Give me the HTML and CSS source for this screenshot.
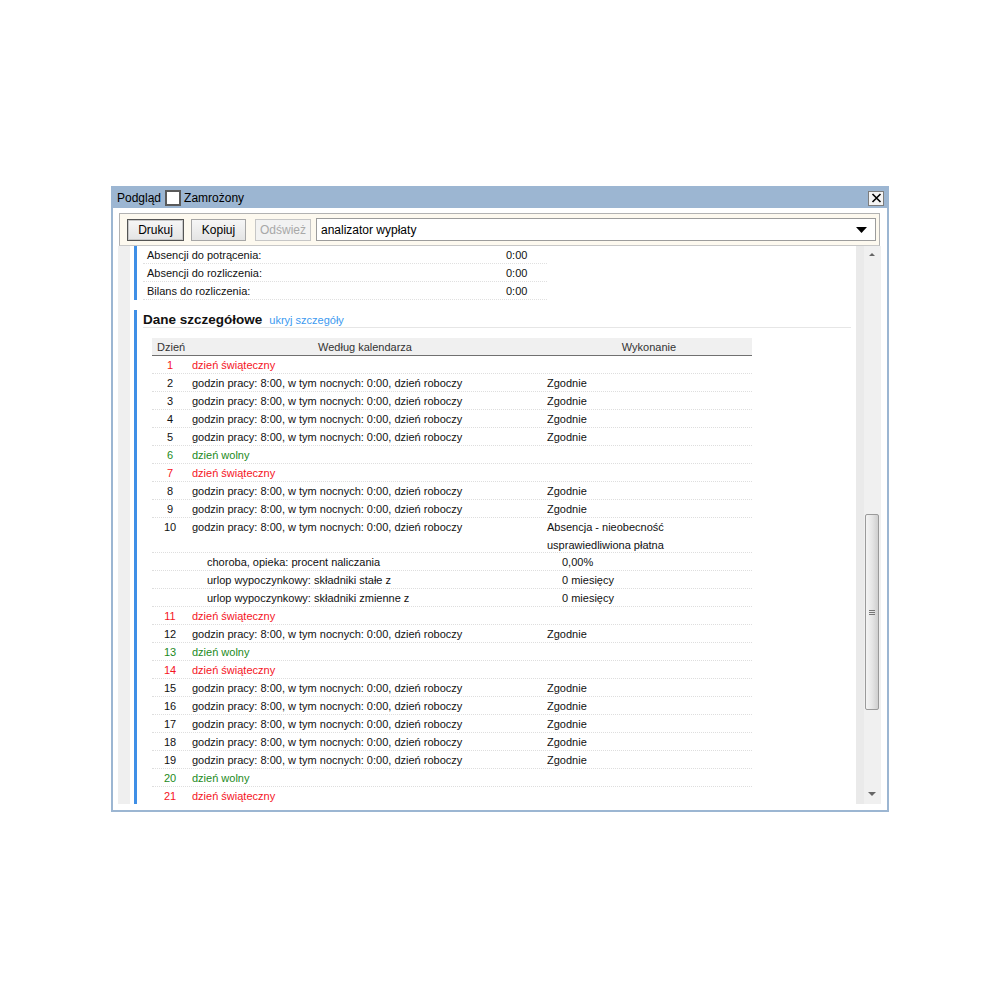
FILE: index.html
```html
<!DOCTYPE html>
<html lang="pl">
<head>
    <meta charset="UTF-8">
    <title>Podgląd - analizator wypłaty</title>
    <link rel="stylesheet" href="styles.css">
</head>
<body>
    <div class="page">
        <div class="window">
            <div class="titlebar">
                <span class="title">Podgląd</span>
                <span class="checkbox"></span>
                <span class="title">Zamrożony</span>
                <span class="close">
                    <svg width="11" height="10" viewBox="0 0 11 10"><path d="M1.5 1 L9.5 9 M9.5 1 L1.5 9" stroke="#000" stroke-width="1.6"/></svg>
                </span>
            </div>

            <div class="toolbar-wrap">
                <div class="toolbar">
                    <button class="btn btn-default">Drukuj</button>
                    <button class="btn">Kopiuj</button>
                    <button class="btn btn-disabled">Odśwież</button>
                    <div class="select">
                        <span>analizator wypłaty</span>
                        <svg width="11" height="6" viewBox="0 0 11 6"><path d="M0 0 H11 L5.5 6 Z" fill="#000"/></svg>
                    </div>
                </div>
            </div>

            <div class="viewer">
                <div class="content">
                    <div class="doc">
                        <!-- podsumowanie (przewinięte) -->
                        <div class="section summary">
                            <div class="sum-row"><span>Absencji do potrącenia:</span><span>0:00</span></div>
                            <div class="sum-row"><span>Absencji do rozliczenia:</span><span>0:00</span></div>
                            <div class="sum-row"><span>Bilans do rozliczenia:</span><span>0:00</span></div>
                        </div>

                        <div class="section details">
                            <div class="heading">
                                <span class="heading-title">Dane szczegółowe</span>
                                <a class="link">ukryj szczegóły</a>
                            </div>

                            <div class="table">
                                <div class="row head">
                                    <div class="c-day">Dzień</div>
                                    <div class="c-cal">Według kalendarza</div>
                                    <div class="c-exe">Wykonanie</div>
                                </div>
                                <div id="rows"></div>
                            </div>
                        </div>
                    </div>
                </div>

                <div class="scroll">
                    <div class="scroll-strip"></div>
                    <div class="track">
                        <div class="arrow-up"></div>
                        <div class="thumb"><span class="grip"></span></div>
                        <div class="arrow-down"></div>
                    </div>
                </div>
            </div>
        </div>
    </div>

    <script>
        // dni miesiąca: h = święto, f = wolny, w = roboczy
        const WORK = 'godzin pracy: 8:00, w tym nocnych: 0:00, dzień roboczy';
        const days = [
            { d: 1, t: 'h' }, { d: 2, t: 'w' }, { d: 3, t: 'w' }, { d: 4, t: 'w' },
            { d: 5, t: 'w' }, { d: 6, t: 'f' }, { d: 7, t: 'h' }, { d: 8, t: 'w' },
            { d: 9, t: 'w' },
            { d: 10, t: 'w', exe: 'Absencja - nieobecność<br>usprawiedliwiona płatna', subs: [
                ['choroba, opieka: procent naliczania', '0,00%'],
                ['urlop wypoczynkowy: składniki stałe z', '0 miesięcy'],
                ['urlop wypoczynkowy: składniki zmienne z', '0 miesięcy']
            ] },
            { d: 11, t: 'h' }, { d: 12, t: 'w' }, { d: 13, t: 'f' }, { d: 14, t: 'h' },
            { d: 15, t: 'w' }, { d: 16, t: 'w' }, { d: 17, t: 'w' }, { d: 18, t: 'w' },
            { d: 19, t: 'w' }, { d: 20, t: 'f' }, { d: 21, t: 'h' }
        ];

        const rows = document.getElementById('rows');
        let html = '';
        days.forEach(day => {
            let cls = 'row', cal = WORK, exe = day.exe || 'Zgodnie';
            if (day.t === 'h') { cls += ' holiday'; cal = 'dzień świąteczny'; exe = ''; }
            if (day.t === 'f') { cls += ' free'; cal = 'dzień wolny'; exe = ''; }
            if (day.exe) cls += ' tall';
            html += `<div class="${cls}"><div class="c-day">${day.d}</div><div class="c-cal">${cal}</div><div class="c-exe">${exe}</div></div>`;
            (day.subs || []).forEach(s => {
                html += `<div class="row sub"><div class="c-day"></div><div class="c-cal">${s[0]}</div><div class="c-exe">${s[1]}</div></div>`;
            });
        });
        rows.innerHTML = html;
    </script>
</body>
</html>
```

FILE: styles.css
```css
body {
    margin: 0;
    padding: 0;
    background: #fff;
    font-family: "Liberation Sans", Arial, sans-serif;
    color: #111;
}

.page {
    padding: 186px 0 0 111px;
}

.window {
    width: 774px;
    border: 2px solid #9cb6d2;
    background: #fff;
    padding-bottom: 6px;
}

/* pasek tytułu */
.titlebar {
    height: 20px;
    background: #9cb6d2;
    display: flex;
    align-items: center;
    padding-left: 4px;
}

.title {
    font-size: 12px;
    color: #000;
}

.checkbox {
    width: 12px;
    height: 12px;
    border: 2px solid #5a5a5a;
    background: #fff;
    margin: 0 3px 0 4px;
}

.close {
    margin-left: auto;
    margin-right: 3px;
    width: 14px;
    height: 13px;
    border: 1px solid #7d7d7d;
    background: #f4f4f4;
    display: flex;
    align-items: center;
    justify-content: center;
}

/* przyciski */
.toolbar-wrap {
    padding: 5px 7px 0 6px;
}

.toolbar {
    height: 31px;
    border: 1px solid #b2b2b2;
    border-bottom-color: #c8c8c8;
    background: #fdf9ef;
    display: flex;
    align-items: center;
    padding: 0 3px 0 7px;
}

.btn {
    height: 22px;
    padding: 0;
    font-family: "Liberation Sans", Arial, sans-serif;
    font-size: 12px;
    color: #000;
    background: linear-gradient(#f6f6f6, #e4e4e4);
    border: 1px solid #a6a6a6;
    margin-right: 8px;
    width: 55px;
}

.btn-default {
    width: 57px;
    border: 1px solid #555;
    box-shadow: inset 0 0 0 1px #c8c8c8;
    margin-right: 7px;
}

.btn-disabled {
    color: #a8a8a8;
    border-color: #c6c6c6;
    background: #f2f2f2;
    width: 56px;
    margin-left: 1px;
    margin-right: 5px;
}

.select {
    flex: 1;
    height: 21px;
    border: 1px solid #9c9c9c;
    background: #fff;
    display: flex;
    align-items: center;
    justify-content: space-between;
    padding: 0 8px 0 4px;
    font-size: 12px;
    color: #000;
}

/* obszar podglądu */
.viewer {
    display: flex;
    height: 558px;
}

.content {
    flex: 1;
    overflow: hidden;
    padding-left: 5px;
}

.doc {
    border-left: 12px solid #efefef;
    padding-left: 4px;
    height: 100%;
}

.section {
    border-left: 3px solid #3f8fe6;
    padding-left: 6px;
}

.summary {
    width: 404px;
    margin-bottom: 10px;
}

.sum-row {
    display: grid;
    grid-template-columns: 363px 1fr;
    height: 18px;
    align-items: center;
    font-size: 11px;
    border-bottom: 1px dotted #e0e0e0;
    box-sizing: border-box;
}

.sum-row span:first-child {
    padding-left: 4px;
}

.details {
    height: 500px;
}

.heading {
    display: flex;
    align-items: baseline;
    gap: 7px;
    width: 708px;
    padding-top: 2px;
    height: 15px;
    border-bottom: 1px solid #e6e6e6;
}

.heading-title {
    font-size: 13.5px;
    font-weight: bold;
    color: #111;
}

.link {
    font-size: 11px;
    color: #3c9af0;
}

/* tabela dni */
.table {
    width: 600px;
    margin: 10px 0 0 9px;
    font-size: 11px;
}

.row {
    display: grid;
    grid-template-columns: 36px 354px 1fr;
    height: 18px;
    align-items: center;
    border-bottom: 1px dotted #dedede;
    box-sizing: border-box;
}

.row .c-day {
    text-align: center;
}

.row .c-cal {
    padding-left: 4px;
}

.row .c-exe {
    padding-left: 5px;
}

.row.head {
    background: #f0f0f0;
    border-bottom: 1px solid #707070;
    color: #333;
}

.row.head .c-day {
    text-align: left;
    padding-left: 5px;
}

.row.head .c-cal,
.row.head .c-exe {
    text-align: center;
    padding-left: 0;
}

.row.head .c-exe {
    padding-left: 4px;
}

.row.holiday {
    color: #f5141e;
}

.row.free {
    color: #1c8a1c;
}

.row.tall {
    height: 35px;
    align-items: start;
    line-height: 18px;
}

.row.sub .c-cal {
    padding-left: 19px;
}

.row.sub .c-exe {
    padding-left: 20px;
}

/* pasek przewijania */
.scroll {
    display: flex;
    width: 31px;
}

.scroll-strip {
    width: 8px;
    background: #eaeaea;
}

.track {
    width: 17px;
    background: #f0f0f0;
    position: relative;
}

.arrow-up {
    position: absolute;
    top: 7px;
    left: 5px;
    border-left: 3px solid transparent;
    border-right: 3px solid transparent;
    border-bottom: 3px solid #666;
}

.arrow-down {
    position: absolute;
    bottom: 8px;
    left: 4px;
    border-left: 4px solid transparent;
    border-right: 4px solid transparent;
    border-top: 4px solid #666;
}

.thumb {
    position: absolute;
    top: 268px;
    left: 1px;
    width: 14px;
    height: 196px;
    border: 1px solid #9a9a9a;
    border-radius: 2px;
    box-sizing: border-box;
    background: linear-gradient(to right, #f4f4f4, #e6e6e6 50%, #cfcfcf);
}

.grip {
    position: absolute;
    top: 95px;
    left: 3px;
    width: 6px;
    height: 1px;
    background: #777;
    box-shadow: 0 2px 0 #777, 0 4px 0 #777;
}
```
